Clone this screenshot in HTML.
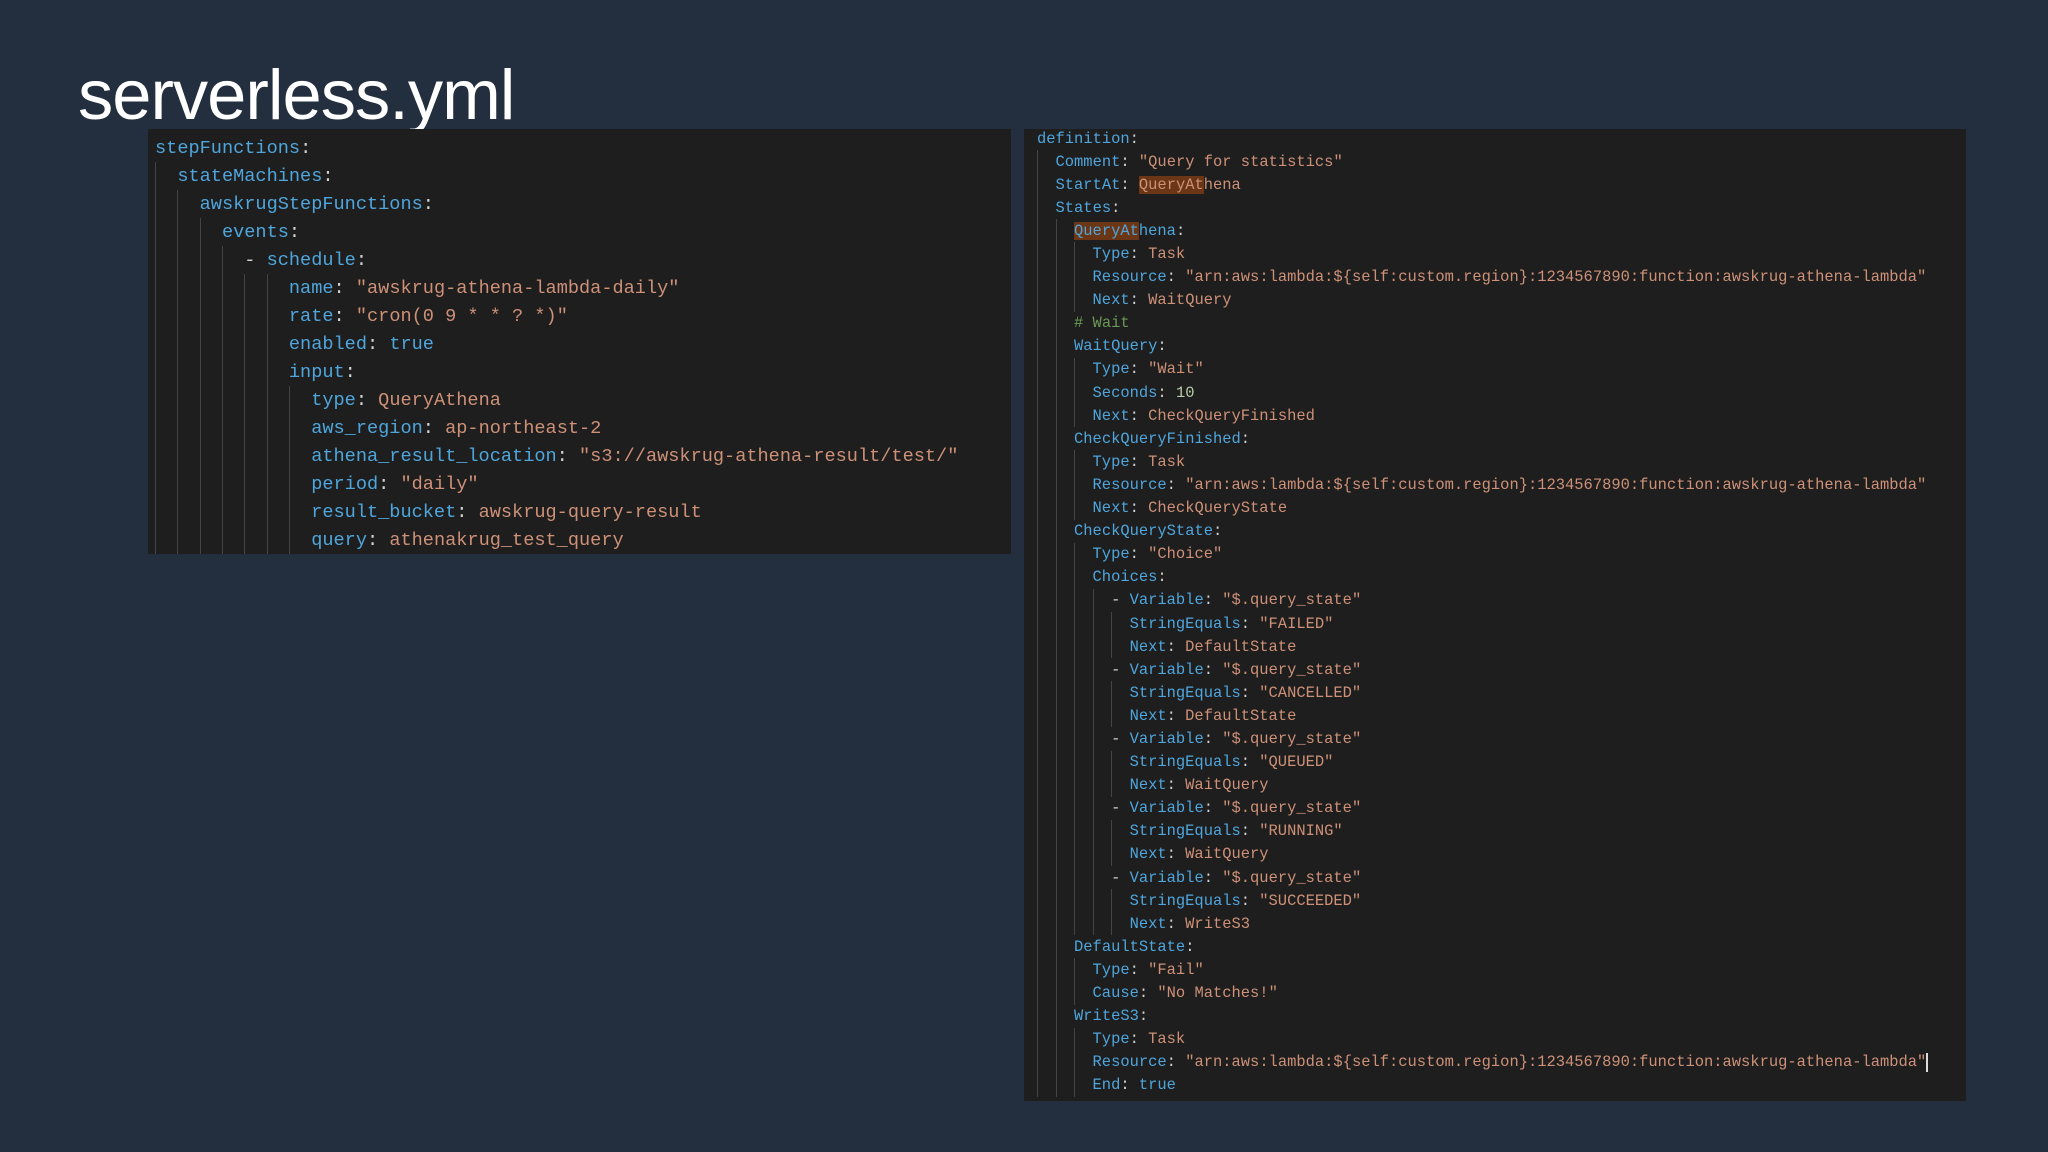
<!DOCTYPE html>
<html><head><meta charset="utf-8"><style>
*{margin:0;padding:0;box-sizing:border-box}
body{width:2048px;height:1152px;background:#232f3e;position:relative;overflow:hidden;font-family:"Liberation Mono",monospace}
h1{position:absolute;left:78px;top:54px;font:400 70.5px "Liberation Sans",sans-serif;color:#fff;letter-spacing:-1px}
.panel{position:absolute;background:#1e1e1e}
.code{position:absolute;color:#d4d4d4}
.code div{display:flex;align-items:center;white-space:pre}
.code i{display:inline-block;width:2ch;align-self:stretch;border-left:1px solid #444;flex:none}
.k{color:#4fa6dd}.s{color:#ce9178}.n{color:#b5cea8}.c{color:#6a9955}.w{color:#d4d4d4}
.h{background:#6b3615}
#L{left:155px;top:134px;font-size:18.6px}
#L div{height:28px}
#R{left:1037px;top:127px;font-size:15.45px}
#R div{height:23.1px}
.cur{display:inline-block;width:2px;height:19px;background:#ddd;vertical-align:middle}
</style></head><body>
<h1>serverless.yml</h1>
<div class="panel" style="left:148px;top:129px;width:863px;height:425px"></div>
<div class="panel" style="left:1024px;top:129px;width:942px;height:972px"></div>
<div class="code" id="L"><div><span class="k">stepFunctions</span>:</div><div><i></i><span class="k">stateMachines</span>:</div><div><i></i><i></i><span class="k">awskrugStepFunctions</span>:</div><div><i></i><i></i><i></i><span class="k">events</span>:</div><div><i></i><i></i><i></i><i></i><span>- </span><span class="k">schedule</span>:</div><div><i></i><i></i><i></i><i></i><i></i><i></i><span class="k">name</span>: <span class="s">"awskrug-athena-lambda-daily"</span></div><div><i></i><i></i><i></i><i></i><i></i><i></i><span class="k">rate</span>: <span class="s">"cron(0 9 * * ? *)"</span></div><div><i></i><i></i><i></i><i></i><i></i><i></i><span class="k">enabled</span>: <span class="k">true</span></div><div><i></i><i></i><i></i><i></i><i></i><i></i><span class="k">input</span>:</div><div><i></i><i></i><i></i><i></i><i></i><i></i><i></i><span class="k">type</span>: <span class="s">QueryAthena</span></div><div><i></i><i></i><i></i><i></i><i></i><i></i><i></i><span class="k">aws_region</span>: <span class="s">ap-northeast-2</span></div><div><i></i><i></i><i></i><i></i><i></i><i></i><i></i><span class="k">athena_result_location</span>: <span class="s">"s3://awskrug-athena-result/test/"</span></div><div><i></i><i></i><i></i><i></i><i></i><i></i><i></i><span class="k">period</span>: <span class="s">"daily"</span></div><div><i></i><i></i><i></i><i></i><i></i><i></i><i></i><span class="k">result_bucket</span>: <span class="s">awskrug-query-result</span></div><div><i></i><i></i><i></i><i></i><i></i><i></i><i></i><span class="k">query</span>: <span class="s">athenakrug_test_query</span></div></div>
<div class="code" id="R"><div><span class="k">definition</span>:</div><div><i></i><span class="k">Comment</span>: <span class="s">"Query for statistics"</span></div><div><i></i><span class="k">StartAt</span>: <span class="s"><span class="h">QueryAt</span>hena</span></div><div><i></i><span class="k">States</span>:</div><div><i></i><i></i><span class="k"><span class="h">QueryAt</span>hena</span>:</div><div><i></i><i></i><i></i><span class="k">Type</span>: <span class="s">Task</span></div><div><i></i><i></i><i></i><span class="k">Resource</span>: <span class="s">"arn:aws:lambda:${self:custom.region}:1234567890:function:awskrug-athena-lambda"</span></div><div><i></i><i></i><i></i><span class="k">Next</span>: <span class="s">WaitQuery</span></div><div><i></i><i></i><span class="c"># Wait</span></div><div><i></i><i></i><span class="k">WaitQuery</span>:</div><div><i></i><i></i><i></i><span class="k">Type</span>: <span class="s">"Wait"</span></div><div><i></i><i></i><i></i><span class="k">Seconds</span>: <span class="n">10</span></div><div><i></i><i></i><i></i><span class="k">Next</span>: <span class="s">CheckQueryFinished</span></div><div><i></i><i></i><span class="k">CheckQueryFinished</span>:</div><div><i></i><i></i><i></i><span class="k">Type</span>: <span class="s">Task</span></div><div><i></i><i></i><i></i><span class="k">Resource</span>: <span class="s">"arn:aws:lambda:${self:custom.region}:1234567890:function:awskrug-athena-lambda"</span></div><div><i></i><i></i><i></i><span class="k">Next</span>: <span class="s">CheckQueryState</span></div><div><i></i><i></i><span class="k">CheckQueryState</span>:</div><div><i></i><i></i><i></i><span class="k">Type</span>: <span class="s">"Choice"</span></div><div><i></i><i></i><i></i><span class="k">Choices</span>:</div><div><i></i><i></i><i></i><i></i>- <span class="k">Variable</span>: <span class="s">"$.query_state"</span></div><div><i></i><i></i><i></i><i></i><i></i><span class="k">StringEquals</span>: <span class="s">"FAILED"</span></div><div><i></i><i></i><i></i><i></i><i></i><span class="k">Next</span>: <span class="s">DefaultState</span></div><div><i></i><i></i><i></i><i></i>- <span class="k">Variable</span>: <span class="s">"$.query_state"</span></div><div><i></i><i></i><i></i><i></i><i></i><span class="k">StringEquals</span>: <span class="s">"CANCELLED"</span></div><div><i></i><i></i><i></i><i></i><i></i><span class="k">Next</span>: <span class="s">DefaultState</span></div><div><i></i><i></i><i></i><i></i>- <span class="k">Variable</span>: <span class="s">"$.query_state"</span></div><div><i></i><i></i><i></i><i></i><i></i><span class="k">StringEquals</span>: <span class="s">"QUEUED"</span></div><div><i></i><i></i><i></i><i></i><i></i><span class="k">Next</span>: <span class="s">WaitQuery</span></div><div><i></i><i></i><i></i><i></i>- <span class="k">Variable</span>: <span class="s">"$.query_state"</span></div><div><i></i><i></i><i></i><i></i><i></i><span class="k">StringEquals</span>: <span class="s">"RUNNING"</span></div><div><i></i><i></i><i></i><i></i><i></i><span class="k">Next</span>: <span class="s">WaitQuery</span></div><div><i></i><i></i><i></i><i></i>- <span class="k">Variable</span>: <span class="s">"$.query_state"</span></div><div><i></i><i></i><i></i><i></i><i></i><span class="k">StringEquals</span>: <span class="s">"SUCCEEDED"</span></div><div><i></i><i></i><i></i><i></i><i></i><span class="k">Next</span>: <span class="s">WriteS3</span></div><div><i></i><i></i><span class="k">DefaultState</span>:</div><div><i></i><i></i><i></i><span class="k">Type</span>: <span class="s">"Fail"</span></div><div><i></i><i></i><i></i><span class="k">Cause</span>: <span class="s">"No Matches!"</span></div><div><i></i><i></i><span class="k">WriteS3</span>:</div><div><i></i><i></i><i></i><span class="k">Type</span>: <span class="s">Task</span></div><div><i></i><i></i><i></i><span class="k">Resource</span>: <span class="s">"arn:aws:lambda:${self:custom.region}:1234567890:function:awskrug-athena-lambda"</span><span class="cur"></span></div><div><i></i><i></i><i></i><span class="k">End</span>: <span class="k">true</span></div></div>
</body></html>
